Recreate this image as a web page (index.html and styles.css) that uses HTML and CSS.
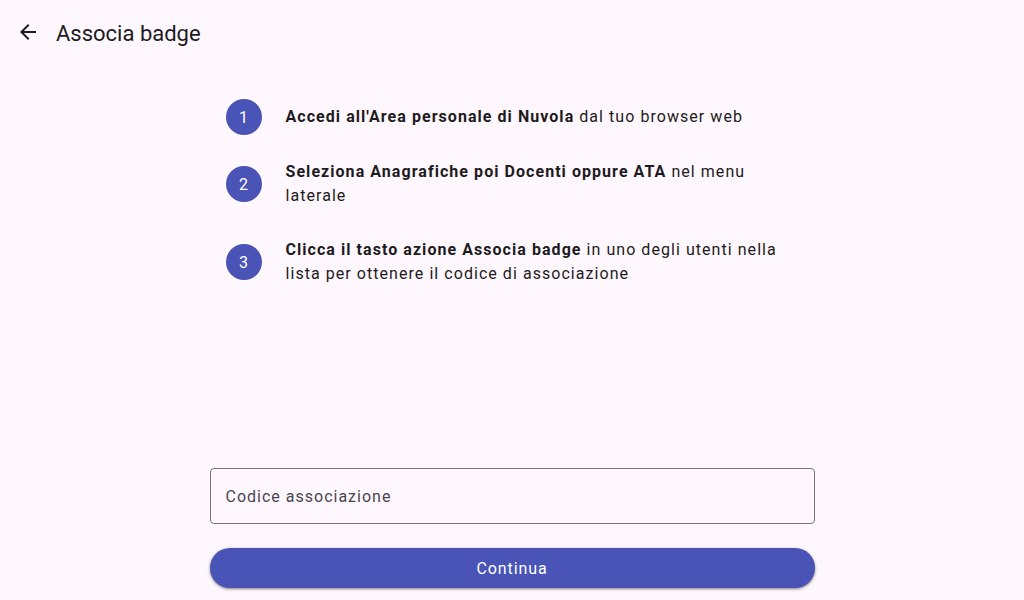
FILE: index.html
```html
<!DOCTYPE html>
<html lang="it">
<head>
<meta charset="utf-8">
<title>Associa badge</title>
<link rel="stylesheet" href="styles.css">
</head>
<body>
<div class="app">
  <header class="topbar">
    <button class="back" aria-label="Indietro">
      <svg width="24" height="24" viewBox="0 0 24 24"><path d="M20 11H7.83l5.59-5.59L12 4l-8 8 8 8 1.41-1.41L7.83 13H20v-2z" fill="#1d1b20"/></svg>
    </button>
    <h1 class="title">Associa badge</h1>
  </header>
  <main class="content">
    <ol class="steps">
      <li class="step step1">
        <span class="num">1</span>
        <p class="text"><b>Accedi all'Area personale di Nuvola</b> dal tuo browser web</p>
      </li>
      <li class="step step2">
        <span class="num">2</span>
        <p class="text"><b>Seleziona Anagrafiche poi Docenti oppure ATA</b> nel menu laterale</p>
      </li>
      <li class="step step3">
        <span class="num">3</span>
        <p class="text"><b>Clicca il tasto azione Associa badge</b> in uno degli utenti nella lista per ottenere il codice di associazione</p>
      </li>
    </ol>
    <div class="form">
      <div class="field"><span class="placeholder">Codice associazione</span></div>
      <button class="primary">Continua</button>
    </div>
  </main>
</div>
</body>
</html>
```

FILE: styles.css
```css
* { box-sizing: border-box; }
html, body { margin: 0; padding: 0; }
body {
  background: #fef7fd;
  font-family: Roboto, "Noto Sans", sans-serif;
  color: #1d1b20;
}
.app {
  width: 1024px;
  height: 600px;
  display: flex;
  flex-direction: column;
  overflow: hidden;
}
.topbar {
  height: 64px;
  display: flex;
  align-items: center;
  padding: 0 0 0 16px;
  flex-shrink: 0;
}
.back {
  width: 24px;
  height: 24px;
  padding: 0;
  border: 0;
  background: none;
  display: flex;
}
.title {
  margin: 3px 0 0 16px;
  font-size: 22px;
  font-weight: 400;
  line-height: 28px;
  color: #1d1b20;
}
.content {
  flex: 1;
  width: 605px;
  margin: 0 auto;
  display: flex;
  flex-direction: column;
}
.steps {
  list-style: none;
  margin: 35px 0 0;
  padding: 0 16px;
}
.step {
  display: flex;
  align-items: center;
  gap: 24px;
}
.step2 { margin-top: 25px; }
.step3 { margin-top: 30px; }
.num {
  width: 36px;
  height: 36px;
  border-radius: 50%;
  background: #4954b6;
  color: #fff;
  display: flex;
  align-items: center;
  justify-content: center;
  font-size: 16px;
  flex-shrink: 0;
}
.text {
  margin: 0;
  font-size: 16px;
  line-height: 24px;
  letter-spacing: 1.05px;
  color: #1d1b20;
}
.text b { font-weight: 700; }
.form {
  margin-top: auto;
  padding-bottom: 12px;
  display: flex;
  flex-direction: column;
  gap: 24px;
}
.field {
  height: 56px;
  border: 1px solid #79747e;
  border-radius: 4px;
  display: flex;
  align-items: center;
  padding: 0 16px 0 15px;
}
.placeholder {
  font-size: 16px;
  letter-spacing: 1px;
  color: #49454f;
}
.primary {
  height: 40px;
  border: 0;
  border-radius: 20px;
  background: #4954b6;
  color: #fff;
  font-family: Roboto, "Noto Sans", sans-serif;
  font-size: 16px;
  letter-spacing: 0.9px;
  box-shadow: 0 1px 2px rgba(0,0,0,0.3), 0 1px 3px 1px rgba(0,0,0,0.15);
}
```
